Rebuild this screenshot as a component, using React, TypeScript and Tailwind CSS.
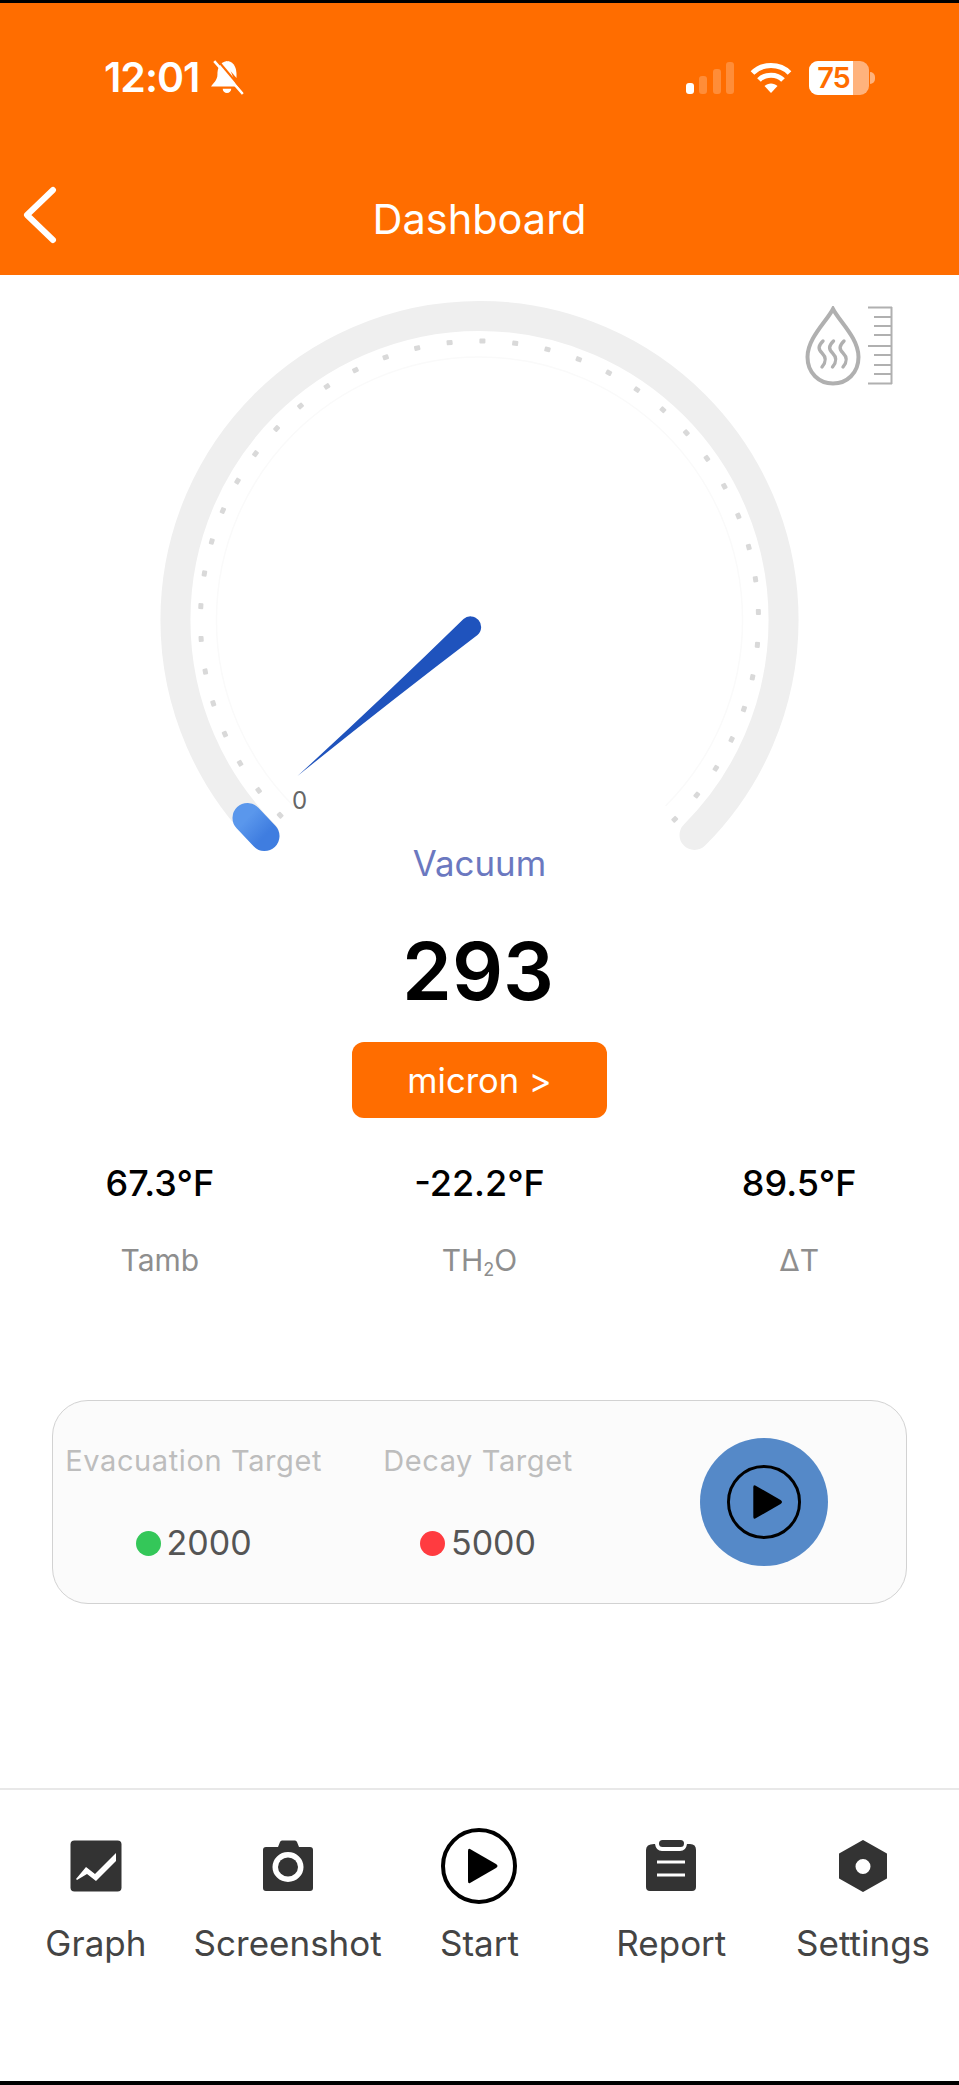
import React from "react";

const CX = 479;
const CY = 620;
const ticks = Array.from({ length: 41 }, (_, i) => 135.6 + i * 6.75);

function Gauge() {
  return (
    <svg className="block overflow-visible" width={680} height={569} viewBox="139.5 275 680 569" fill="none">
      <defs>
        <linearGradient id="pill" x1="0" y1="0" x2="1" y2="1">
          <stop offset="0" stopColor="#5a97ec" />
          <stop offset="1" stopColor="#3f7de0" />
        </linearGradient>
      </defs>
      <path d="M264 835 A304 304 0 1 1 694 835" stroke="#efefef" strokeWidth={30} strokeLinecap="round" />
      <path d="M293 806 A263 263 0 1 1 665 806" stroke="#fafafa" strokeWidth={1.5} />
      {ticks.map((a) => (
        <rect key={a} x={CX + 276.5} y={CY - 3} width={5} height={6} rx={1} fill="#d9d9d9" transform={`rotate(${a} ${CX} ${CY})`} />
      ))}
      <path d="M247 818 L264 836" stroke="url(#pill)" strokeWidth={30} strokeLinecap="round" />
      <path d="M297 776 Q380 700 463 619 A10.5 10.5 0 0 1 477 635 Q385 705 297 776 Z" fill="#1f53bd" />
    </svg>
  );
}

function DropIcon() {
  return (
    <svg width={88} height={80} viewBox="0 0 88 80" fill="none" stroke="#b0b0b0">
      <path d="M28 3 C22 15 2.5 32 2.5 51 C2.5 67 14 77.5 28 77.5 C42 77.5 53.5 67 53.5 51 C53.5 32 34 15 28 3 Z" strokeWidth={4} />
      <path d="M18 35 C13 40 13 43 17 47 C22 52 21 56 17 61" strokeWidth={3.4} strokeLinecap="round" />
      <path d="M28.5 35 C23.5 40 23.5 43 27.5 47 C32.5 52 31.5 56 27.5 61" strokeWidth={3.4} strokeLinecap="round" />
      <path d="M39 35 C34 40 34 43 38 47 C43 52 42 56 38 61" strokeWidth={3.4} strokeLinecap="round" />
      <path d="M86.5 1 V78 M63 1.5 H87 M69 11 H87 M69 20 H87 M69 29 H87 M63 40 H87 M69 49 H87 M69 59 H87 M69 68 H87 M63 77.5 H87" strokeWidth={2} />
    </svg>
  );
}

function StatusBar() {
  return (
    <div className="flex h-[31px] items-center justify-between pl-[104px] pr-[84px]">
      <div className="flex items-center gap-[11px]">
        <span className="text-[41px] font-semibold leading-[31px] tracking-[-1px] text-white">12:01</span>
        <svg width={35} height={35} viewBox="0 0 33 33" fill="#fff">
          <path d="M16 1 C9 2 7 8 7 14 C7 19 3 22 1 25 L25 25 Z" />
          <path d="M17 1 C23 2 25 8 25 14 L25 17 L13 3 Z" />
          <path d="M12 27 H20 A4 4 0 0 1 12 27 Z" />
          <path d="M4 1 L31 32" stroke="#fff" strokeWidth={2.5} />
          <path d="M7 0 L33 31" stroke="#ff6d00" strokeWidth={2} />
        </svg>
      </div>
      <div className="flex items-center">
        <svg width={48} height={32} viewBox="0 0 48 32" fill="#fff">
          <rect x={0} y={21} width={8} height={11} rx={3} />
          <rect x={13} y={14} width={8} height={18} rx={3} opacity={0.22} />
          <rect x={27} y={7} width={8} height={25} rx={3} opacity={0.22} />
          <rect x={40} y={0} width={8} height={32} rx={3} opacity={0.22} />
        </svg>
        <svg className="ml-[16px]" width={42} height={32} viewBox="0 0 42 32" fill="none" stroke="#fff" strokeWidth={5}>
          <path d="M2.5 11 C12 1 30 1 39.5 11" />
          <path d="M9 18 C15 11.5 27 11.5 33 18" />
          <path d="M21 31 L14.5 24 C18 20.5 24 20.5 27.5 24 Z" fill="#fff" stroke="none" />
        </svg>
        <div className="relative ml-[17px] flex h-[34px] w-[60px] items-center overflow-hidden rounded-[9px] bg-[#ffb27c]">
          <div className="flex h-full w-[44px] items-center justify-center bg-white pl-[5px]">
            <span className="text-[29px] font-semibold leading-none tracking-[-1px] text-[#ff6d00]">75</span>
          </div>
        </div>
        <div className="ml-[1px] h-[12px] w-[5px] rounded-r-full bg-[#ffb27c]" />
      </div>
    </div>
  );
}

function Header() {
  return (
    <header className="h-[272px] bg-[#ff6d00]">
      <div className="pt-[59px]">
        <StatusBar />
      </div>
      <div className="relative mt-[87px] flex h-[80px] items-center justify-center">
        <svg className="absolute left-[22px] top-[6px]" width={36} height={58} viewBox="0 0 36 58" fill="none" stroke="#fff" strokeWidth={6} strokeLinecap="round" strokeLinejoin="round">
          <path d="M31 4 L5 29 L31 54" />
        </svg>
        <span className="text-[41.5px] font-normal leading-none text-white">Dashboard</span>
      </div>
    </header>
  );
}

function Stat({ value, label }: { value: string; label: React.ReactNode }) {
  return (
    <div className="flex flex-col items-center">
      <div className="text-[36px] font-medium leading-[40px] text-black">{value}</div>
      <div className="mt-[37px] text-[30px] leading-[40px] text-[#8e8e8e]">{label}</div>
    </div>
  );
}

function Target({ label, value, dot }: { label: string; value: string; dot: string }) {
  return (
    <div className="flex flex-col items-center pr-[3px]">
      <div className="whitespace-nowrap text-[29px] leading-[40px] tracking-[0.6px] text-[#bdbdbd]">{label}</div>
      <div className="mt-[42px] flex items-center gap-[6px]">
        <span className={`h-[25px] w-[25px] rounded-full ${dot}`} />
        <span className="text-[34px] leading-[40px] text-[#555555]">{value}</span>
      </div>
    </div>
  );
}

function PlayIcon({ size, stroke }: { size: number; stroke: number }) {
  return (
    <svg width={size} height={size} viewBox="0 0 76 76">
      <circle cx={38} cy={38} r={38 - stroke / 2} fill="none" stroke="#000" strokeWidth={stroke} />
      <path d="M27 23 Q27 20 29 21 L55 36 Q58 38 55 40 L29 55 Q27 56 27 53 Z" fill="#000" />
    </svg>
  );
}

const navIcons = {
  graph: (
    <svg width={52} height={52} viewBox="0 0 52 52">
      <rect x={0.5} y={0.5} width={51} height={51} rx={4} fill="#333" />
      <path d="M6 39 L16 27 L25 34 L46 13 L46 21 L26 41 L17 34 L7 40 Z" fill="#fff" />
    </svg>
  ),
  camera: (
    <svg width={52} height={52} viewBox="0 0 52 52">
      <path fillRule="evenodd" fill="#333" d="M16 7 L18 2 Q18.5 0.5 20 0.5 H33 Q34.5 0.5 35 2 L37 7 H48 Q51 7 51 10 V48 Q51 51 48 51 H4 Q1 51 1 48 V10 Q1 7 4 7 Z M26 12 A15 14.5 0 1 0 26 42 A15 14.5 0 1 0 26 12 Z" />
      <ellipse cx={26} cy={27} rx={10} ry={9.5} fill="#333" />
    </svg>
  ),
  report: (
    <svg width={52} height={52} viewBox="0 0 52 52">
      <rect x={14} y={0} width={25} height={7} rx={3.5} fill="#333" />
      <path d="M9 4 H10 Q11 11 17 11 H35 Q41 11 42 4 H45 Q51 4 51 10 V47 Q51 51 47 51 H5 Q1 51 1 47 V10 Q1 4 9 4 Z" fill="#333" />
      <path d="M12 22 H40 M12 35 H40" stroke="#fff" strokeWidth={3} />
    </svg>
  ),
  settings: (
    <svg width={52} height={52} viewBox="0 0 52 52">
      <path fillRule="evenodd" fill="#333" stroke="#333" strokeWidth={2} strokeLinejoin="round" d="M26 1 L49 14 V38 L26 51 L3 38 V14 Z M26 18 A8.5 8.5 0 1 0 26 35 A8.5 8.5 0 1 0 26 18 Z" />
    </svg>
  ),
};

function NavItem({ icon, label }: { icon: React.ReactNode; label: string }) {
  return (
    <div className="flex flex-col items-center">
      <div className="flex h-[76px] items-center justify-center">{icon}</div>
      <div className="mt-[17px] whitespace-nowrap text-[35px] leading-[44px] text-[#444444]">{label}</div>
    </div>
  );
}

export default function App() {
  return (
    <div className="flex h-[2085px] w-[959px] flex-col bg-white font-['Inter','Liberation_Sans',sans-serif]">
      <div className="h-[3px] bg-black" />
      <Header />
      <main className="flex flex-1 flex-col">
        <div className="relative flex h-[568px] justify-center">
          <Gauge />
          <div className="absolute left-[805px] top-[31px]">
            <DropIcon />
          </div>
          <div className="absolute left-[292px] top-[514px] text-[24px] leading-[24px] text-[#666666]">0</div>
        </div>
        <div className="text-center text-[34.8px] leading-[40px] text-[#6b78c0]">Vacuum</div>
        <div className="mt-[43px] pr-[3px] text-center text-[80px] font-semibold leading-[90px] text-black">293</div>
        <button className="mx-auto mt-[26px] flex h-[76px] w-[255px] items-center justify-center rounded-[12px] bg-[#ff6d00] pt-[2px] text-[34.5px] leading-none text-white">
          micron &gt;
        </button>
        <div className="mt-[45px] grid grid-cols-3">
          <Stat value="67.3°F" label="Tamb" />
          <Stat value="-22.2°F" label={<>TH<span className="relative top-[5px] text-[18px]">2</span>O</>} />
          <Stat value="89.5°F" label="ΔT" />
        </div>
        <div className="mx-[52px] mt-[115px] grid h-[204px] grid-cols-3 items-center rounded-[36px] border border-[#d2d2d2] bg-[#fbfbfb]">
          <Target label="Evacuation Target" value="2000" dot="bg-[#34c759]" />
          <Target label="Decay Target" value="5000" dot="bg-[#ff3b40]" />
          <div className="flex justify-center">
            <div className="flex h-[128px] w-[128px] items-center justify-center rounded-full bg-[#5589c8]">
              <PlayIcon size={74} stroke={3} />
            </div>
          </div>
        </div>
      </main>
      <nav className="grid h-[293px] grid-cols-5 border-t-2 border-[#e8e8e8] pt-[38px]">
        <NavItem icon={navIcons.graph} label="Graph" />
        <NavItem icon={navIcons.camera} label="Screenshot" />
        <NavItem icon={<PlayIcon size={76} stroke={4} />} label="Start" />
        <NavItem icon={navIcons.report} label="Report" />
        <NavItem icon={navIcons.settings} label="Settings" />
      </nav>
      <div className="h-[4px] bg-black" />
    </div>
  );
}
